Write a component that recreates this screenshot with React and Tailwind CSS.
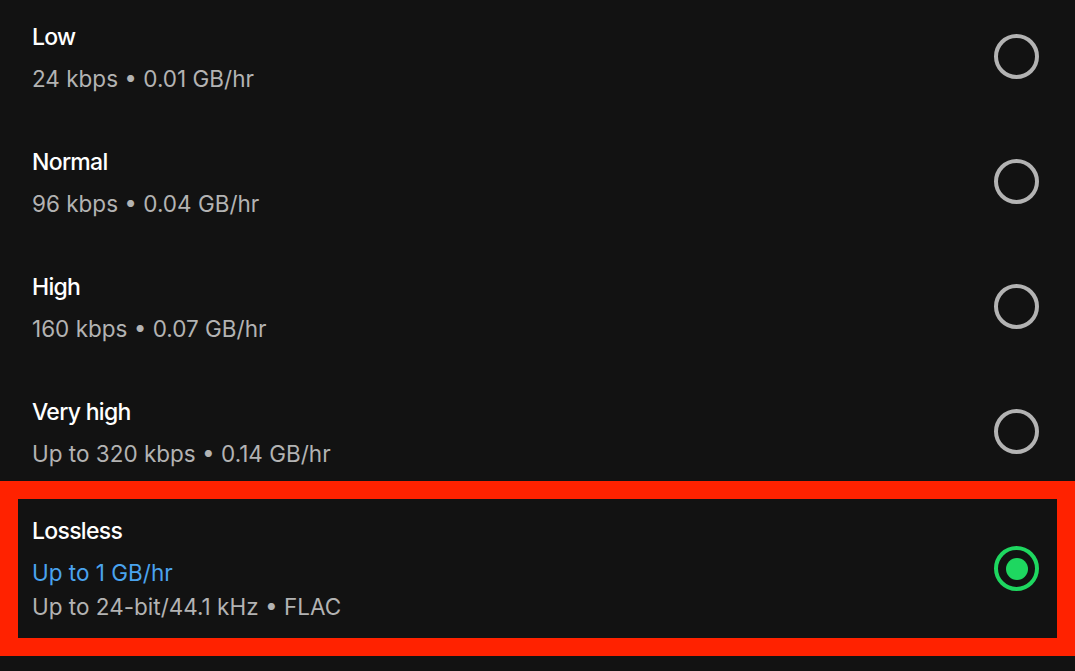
const options = [
  { title: "Low", detail: "24 kbps • 0.01 GB/hr" },
  { title: "Normal", detail: "96 kbps • 0.04 GB/hr" },
  { title: "High", detail: "160 kbps • 0.07 GB/hr" },
  { title: "Very high", detail: "Up to 320 kbps • 0.14 GB/hr" },
];

function Radio({ checked }) {
  if (checked) {
    return (
      <div className="w-[45px] h-[45px] rounded-full border-[4px] border-[#1ed760] flex items-center justify-center shrink-0">
        <div className="w-[22px] h-[22px] rounded-full bg-[#1ed760]" />
      </div>
    );
  }
  return <div className="w-[45px] h-[45px] rounded-full border-[4px] border-[#b3b3b3] shrink-0" />;
}

export default function App() {
  return (
    <div
      className="w-[1075px] h-[671px] bg-[#121212] overflow-hidden"
      style={{ fontFamily: "Inter, 'Noto Sans', sans-serif" }}
    >
      {/* ── Regular quality rows ── */}
      <div className="-mt-[6px]">
        {options.map((o) => (
          <div key={o.title} className="h-[125px] flex items-center justify-between pl-[32px] pr-[36px]">
            <div className="mt-[3px]">
              <p className="text-[23px] leading-[30px] font-medium tracking-[-0.7px] text-white">{o.title}</p>
              <p className="mt-[12px] text-[22.5px] leading-[30px] text-[#b3b3b3]">{o.detail}</p>
            </div>
            <Radio />
          </div>
        ))}
      </div>

      {/* ── Highlighted lossless row ── */}
      <div className="-mt-[13px] h-[175px] border-[18px] border-[#ff2200] flex items-center justify-between pl-[14px] pr-[18px]">
        <div>
          <p className="text-[23px] leading-[30px] font-medium tracking-[-0.7px] text-white">Lossless</p>
          <p className="mt-[12px] text-[22.5px] leading-[30px] text-[#4aa3ee]">Up to 1 GB/hr</p>
          <p className="mt-[4px] text-[22.5px] leading-[30px] text-[#b3b3b3]">Up to 24-bit/44.1 kHz • FLAC</p>
        </div>
        <Radio checked />
      </div>
    </div>
  );
}
